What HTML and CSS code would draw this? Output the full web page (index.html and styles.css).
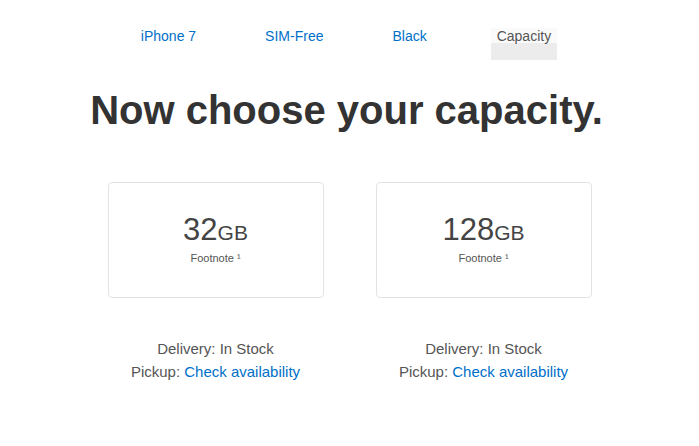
FILE: index.html
```html
<!DOCTYPE html>
<html>
<head>
<meta charset="utf-8">
<link rel="stylesheet" href="styles.css">
</head>
<body>
<div class="page">
  <nav class="steps">
    <a class="step link">iPhone 7</a>
    <a class="step link">SIM-Free</a>
    <a class="step link">Black</a>
    <span class="step current">Capacity</span>
  </nav>
  <h1 class="title">Now choose your capacity.</h1>
  <div class="options">
    <div class="option">
      <div class="card">
        <div class="size">32<span class="unit">GB</span></div>
        <div class="note">Footnote ¹</div>
      </div>
      <div class="avail">
        <div>Delivery: In Stock</div>
        <div>Pickup: <a class="link">Check availability</a></div>
      </div>
    </div>
    <div class="option">
      <div class="card">
        <div class="size">128<span class="unit">GB</span></div>
        <div class="note">Footnote ¹</div>
      </div>
      <div class="avail">
        <div>Delivery: In Stock</div>
        <div>Pickup: <a class="link">Check availability</a></div>
      </div>
    </div>
  </div>
</div>
</body>
</html>
```
FILE: styles.css
```css
html, body {
  margin: 0;
  padding: 0;
  background: #fff;
}
body {
  font-family: "Liberation Sans", Arial, sans-serif;
  color: #333;
}
.page {
  width: 699px;
  display: flex;
  flex-direction: column;
  align-items: center;
}
.steps {
  display: flex;
  align-items: flex-start;
  gap: 59px;
  padding-top: 28px;
  font-size: 14px;
  margin-right: 6px;
}
.step {
  display: block;
  padding: 0 5px 8px;
  line-height: 16px;
}
.link {
  color: #0070c9;
  text-decoration: none;
}
.current {
  color: #555;
  padding: 0 6px 16px;
  background: linear-gradient(to bottom, #fafafa 0, #fafafa 15px, #ececec 15px);
}
.title {
  margin: 27px 6px 0 0;
  font-size: 40px;
  font-weight: 700;
  color: #333;
  line-height: 46px;
}
.options {
  display: flex;
  gap: 52px;
  margin-top: 49px;
}
.option {
  width: 216px;
  display: flex;
  flex-direction: column;
  align-items: center;
}
.card {
  box-sizing: border-box;
  width: 216px;
  height: 116px;
  border: 1px solid #e3e3e3;
  border-radius: 4px;
  display: flex;
  flex-direction: column;
  align-items: center;
  justify-content: center;
  padding-bottom: 2px;
}
.size {
  font-size: 31px;
  line-height: 32px;
  color: #444;
}
.unit {
  font-size: 21px;
}
.note {
  font-size: 11px;
  color: #555;
  margin-top: 3px;
}
.avail {
  margin-top: 39px;
  font-size: 15px;
  line-height: 23px;
  color: #555;
  text-align: center;
}
```
